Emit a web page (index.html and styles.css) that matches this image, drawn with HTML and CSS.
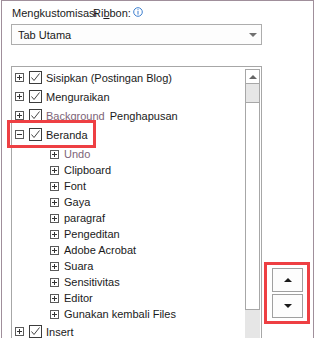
FILE: index.html
```html
<!DOCTYPE html>
<html lang="id">
<head>
    <meta charset="UTF-8">
    <title>Mengkustomisasi Ribbon</title>
    <link rel="stylesheet" href="styles.css">
</head>
<body>

<div class="panel">
    <div class="label">
        <span>Mengkustomisasi</span><span class="ribbon">Ri<u>b</u>bon:</span>
        <svg class="info" width="10" height="10" viewBox="0 0 10 10">
            <circle cx="5" cy="5" r="4.3" fill="none" stroke="#3d7fcf" stroke-width="1"/>
            <rect x="4.5" y="2.2" width="1" height="1" fill="#3d7fcf"/>
            <rect x="4.5" y="4" width="1" height="3.6" fill="#3d7fcf"/>
        </svg>
    </div>

    <div class="select">
        <span>Tab Utama</span>
        <span class="caret"></span>
    </div>

    <div class="main">
        <div class="tree">
            <div class="list">
                <div class="row"><span class="exp"></span><span class="check"></span><span>Sisipkan (Postingan Blog)</span></div>
                <div class="row"><span class="exp"></span><span class="check"></span><span>Menguraikan</span></div>
                <div class="row"><span class="exp"></span><span class="check"></span><span class="dim">Background</span><span class="extra">Penghapusan</span></div>
                <div class="row selected"><span class="exp open"></span><span class="check"></span><span>Beranda</span><span class="mark"></span></div>
                <div class="children">
                    <div class="row child"><span class="exp"></span><span class="dim">Undo</span></div>
                    <div class="row child"><span class="exp"></span><span>Clipboard</span></div>
                    <div class="row child"><span class="exp"></span><span>Font</span></div>
                    <div class="row child"><span class="exp"></span><span>Gaya</span></div>
                    <div class="row child"><span class="exp"></span><span>paragraf</span></div>
                    <div class="row child"><span class="exp"></span><span>Pengeditan</span></div>
                    <div class="row child"><span class="exp"></span><span>Adobe Acrobat</span></div>
                    <div class="row child"><span class="exp"></span><span>Suara</span></div>
                    <div class="row child"><span class="exp"></span><span>Sensitivitas</span></div>
                    <div class="row child"><span class="exp"></span><span>Editor</span></div>
                    <div class="row child"><span class="exp"></span><span>Gunakan kembali Files</span></div>
                </div>
                <div class="row"><span class="exp"></span><span class="check"></span><span>Insert</span></div>
            </div>
            <div class="scrollbar">
                <div class="sb-btn"><span class="tri up small"></span></div>
                <div class="sb-track"></div>
                <div class="sb-thumb"></div>
            </div>
        </div>

        <div class="order">
            <div class="order-group">
                <button class="move"><span class="tri up"></span></button>
                <button class="move"><span class="tri down"></span></button>
            </div>
        </div>
    </div>
</div>

</body>
</html>
```

FILE: styles.css
```css
html, body {
    margin: 0;
    height: 338px;
    overflow: hidden;
    background-color: #fff;
}

body {
    font-family: "Liberation Sans", Arial, sans-serif;
    font-size: 11px;
    color: #1a1a1a;
}

.panel {
    margin-left: 1px;
    border: 1px solid #a08f9b;
    border-bottom: none;
    padding: 5px 0 0 9px;
    height: 400px;
}

.label {
    display: flex;
    align-items: center;
    height: 14px;
    padding-left: 1px;
    line-height: 14px;
}

.ribbon {
    margin-left: -4px;
}

.ribbon u {
    text-underline-offset: 1px;
}

.info {
    margin-left: 2px;
    margin-top: -3px;
}

.select {
    display: flex;
    align-items: center;
    justify-content: space-between;
    box-sizing: border-box;
    width: 251px;
    height: 21px;
    margin-top: 4px;
    padding: 0 4px 0 6px;
    border: 1px solid #adadad;
    background-color: #fdfdfd;
}

.caret {
    width: 0;
    height: 0;
    border-left: 4px solid transparent;
    border-right: 4px solid transparent;
    border-top: 4px solid #707070;
    margin-top: 1px;
}

.main {
    display: flex;
    align-items: flex-start;
    margin-top: 21px;
}

.tree {
    display: flex;
    box-sizing: border-box;
    width: 251px;
    height: 300px;
    border: 1px solid #a7a7a7;
}

.list {
    flex: 1;
    padding-top: 1px;
}

.row {
    position: relative;
    display: flex;
    align-items: center;
    height: 19px;
    padding-left: 3px;
    white-space: nowrap;
}

.row.child {
    height: 16px;
    padding-left: 38px;
}

.children {
    padding-top: 2px;
}

.exp {
    position: relative;
    box-sizing: border-box;
    width: 9px;
    height: 9px;
    margin-right: 5px;
    border: 1px solid #5a5a5a;
    flex-shrink: 0;
}

.exp::before,
.exp::after {
    content: "";
    position: absolute;
    background-color: #333;
}

.exp::before {
    left: 1px;
    top: 3px;
    width: 5px;
    height: 1px;
}

.exp::after {
    left: 3px;
    top: 1px;
    width: 1px;
    height: 5px;
}

.exp.open::after {
    display: none;
}

.check {
    box-sizing: border-box;
    width: 13px;
    height: 13px;
    margin-right: 4px;
    border: 1px solid #3c3c3c;
    flex-shrink: 0;
    background: url("data:image/svg+xml,%3Csvg xmlns='http://www.w3.org/2000/svg' width='11' height='11'%3E%3Cpath d='M1.5 5.5 L4 8.5 L9.5 1.5' fill='none' stroke='%23444' stroke-width='1'/%3E%3C/svg%3E") no-repeat center;
}

.dim {
    color: #7d6478;
}

.extra {
    margin-left: 5px;
    color: #1a1a1a;
}

.mark {
    position: absolute;
    left: -5px;
    top: -5px;
    box-sizing: border-box;
    width: 89px;
    height: 28px;
    border: 3px solid #ee3f43;
}

.scrollbar {
    display: flex;
    flex-direction: column;
    width: 15px;
    margin: 2px 1px 0 0;
    background-color: #e6e6e6;
}

.sb-btn {
    display: flex;
    align-items: center;
    justify-content: center;
    box-sizing: border-box;
    height: 15px;
    border: 1px solid #a7a7a7;
    background-color: #fff;
}

.sb-track {
    height: 18px;
    border-left: 1px solid #a7a7a7;
    border-right: 1px solid #a7a7a7;
}

.sb-thumb {
    box-sizing: border-box;
    height: 208px;
    border: 1px solid #a7a7a7;
    background-color: #fff;
}

.tri {
    width: 0;
    height: 0;
    border-left: 4px solid transparent;
    border-right: 4px solid transparent;
}

.tri.up {
    border-bottom: 4px solid #1a1a1a;
}

.tri.down {
    border-top: 4px solid #1a1a1a;
}

.tri.small {
    border-bottom-color: #666;
}

.order {
    padding-left: 2px;
    margin-top: 196px;
}

.order-group {
    display: flex;
    flex-direction: column;
    gap: 2px;
    padding: 3px 4px 3px 5px;
    border: 3px solid #ee3f43;
}

.move {
    display: flex;
    align-items: center;
    justify-content: center;
    box-sizing: border-box;
    width: 31px;
    height: 24px;
    padding: 0;
    border: 1px solid #a0a0a0;
    background-color: #fdfdfd;
}
```
